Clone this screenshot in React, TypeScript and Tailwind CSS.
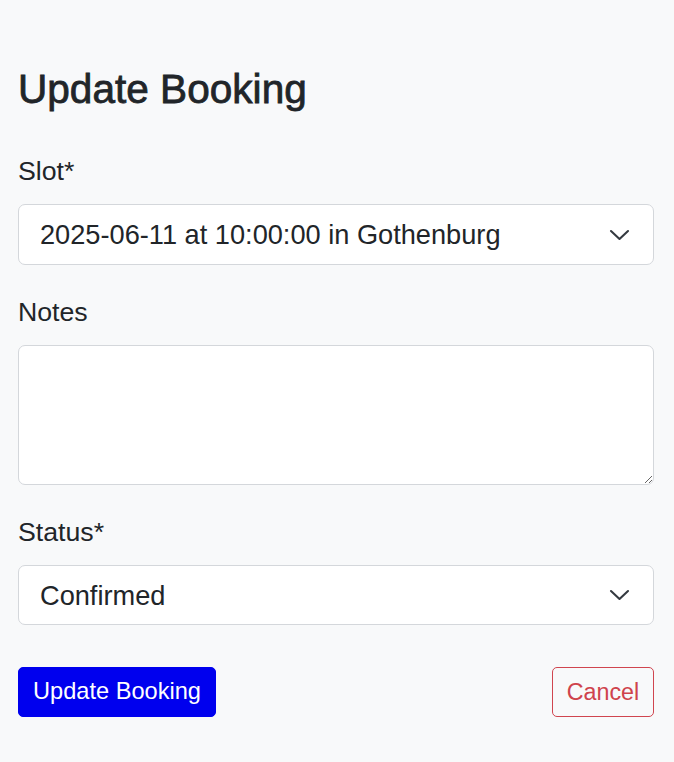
import React from "react";

function Chevron() {
  return (
    <svg
      className="pointer-events-none absolute right-[24px] top-1/2 -translate-y-1/2"
      width="21"
      height="12"
      viewBox="0 0 21 12"
      fill="none"
    >
      <path d="M2 2 L10.5 10 L19 2" stroke="#343a40" strokeWidth="2.1" strokeLinecap="round" strokeLinejoin="round" />
    </svg>
  );
}

function SelectBox({ value, options, h }: { value: string; options: string[]; h: string }) {
  return (
    <div className="relative">
      <select
        defaultValue={value}
        className={`block w-full appearance-none rounded-[7px] border border-[#d4d7db] bg-white pt-[2px] pl-[21px] pr-[60px] text-[27.2px] text-[#212529] outline-none ${h}`}
        style={{ fontFamily: '"Liberation Sans", Arial, sans-serif' }}
      >
        {options.map((o) => (
          <option key={o}>{o}</option>
        ))}
      </select>
      <Chevron />
    </div>
  );
}

export default function App() {
  return (
    <div
      className="min-h-screen bg-[#f8f9fa] text-[#212529]"
      style={{ fontFamily: '"Liberation Sans", Arial, Helvetica, sans-serif' }}
    >
      <div className="pl-[18px] pr-[20px] pt-[65px]">
        <h1 className="mb-[38px] text-[40.6px] font-normal leading-[48px] [-webkit-text-stroke:0.8px_#212529]">
          Update Booking
        </h1>
        <form onSubmit={(e) => e.preventDefault()}>
          <label className="mb-[13px] block text-[26.7px] leading-[40px]">Slot*</label>
          <div className="mb-[27px]">
            <SelectBox
              value="2025-06-11 at 10:00:00 in Gothenburg"
              options={["2025-06-11 at 10:00:00 in Gothenburg"]}
              h="h-[61px]"
            />
          </div>
          <label className="mb-[13px] block text-[26.7px] leading-[40px]">Notes</label>
          <div className="mb-[27px]">
            <textarea className="block h-[140px] w-full rounded-[7px] border border-[#d4d7db] bg-white px-[21px] py-[10px] text-[26.7px] outline-none" />
          </div>
          <label className="mb-[13px] block text-[26.7px] leading-[40px]">Status*</label>
          <div>
            <SelectBox value="Confirmed" options={["Pending", "Confirmed", "Cancelled"]} h="h-[60px]" />
          </div>
          <div className="mt-[42px] flex items-center justify-between">
            <button
              type="submit"
              className="flex h-[50px] w-[198px] items-center justify-center rounded-[5px] border border-[#0000ee] bg-[#0000ee] text-[23.6px] text-white"
            >
              Update Booking
            </button>
            <button
              type="button"
              className="flex h-[50px] w-[102px] items-center justify-center rounded-[5px] border border-[#d0454f] bg-transparent text-[23.3px] text-[#cf434c]"
            >
              Cancel
            </button>
          </div>
        </form>
      </div>
    </div>
  );
}
